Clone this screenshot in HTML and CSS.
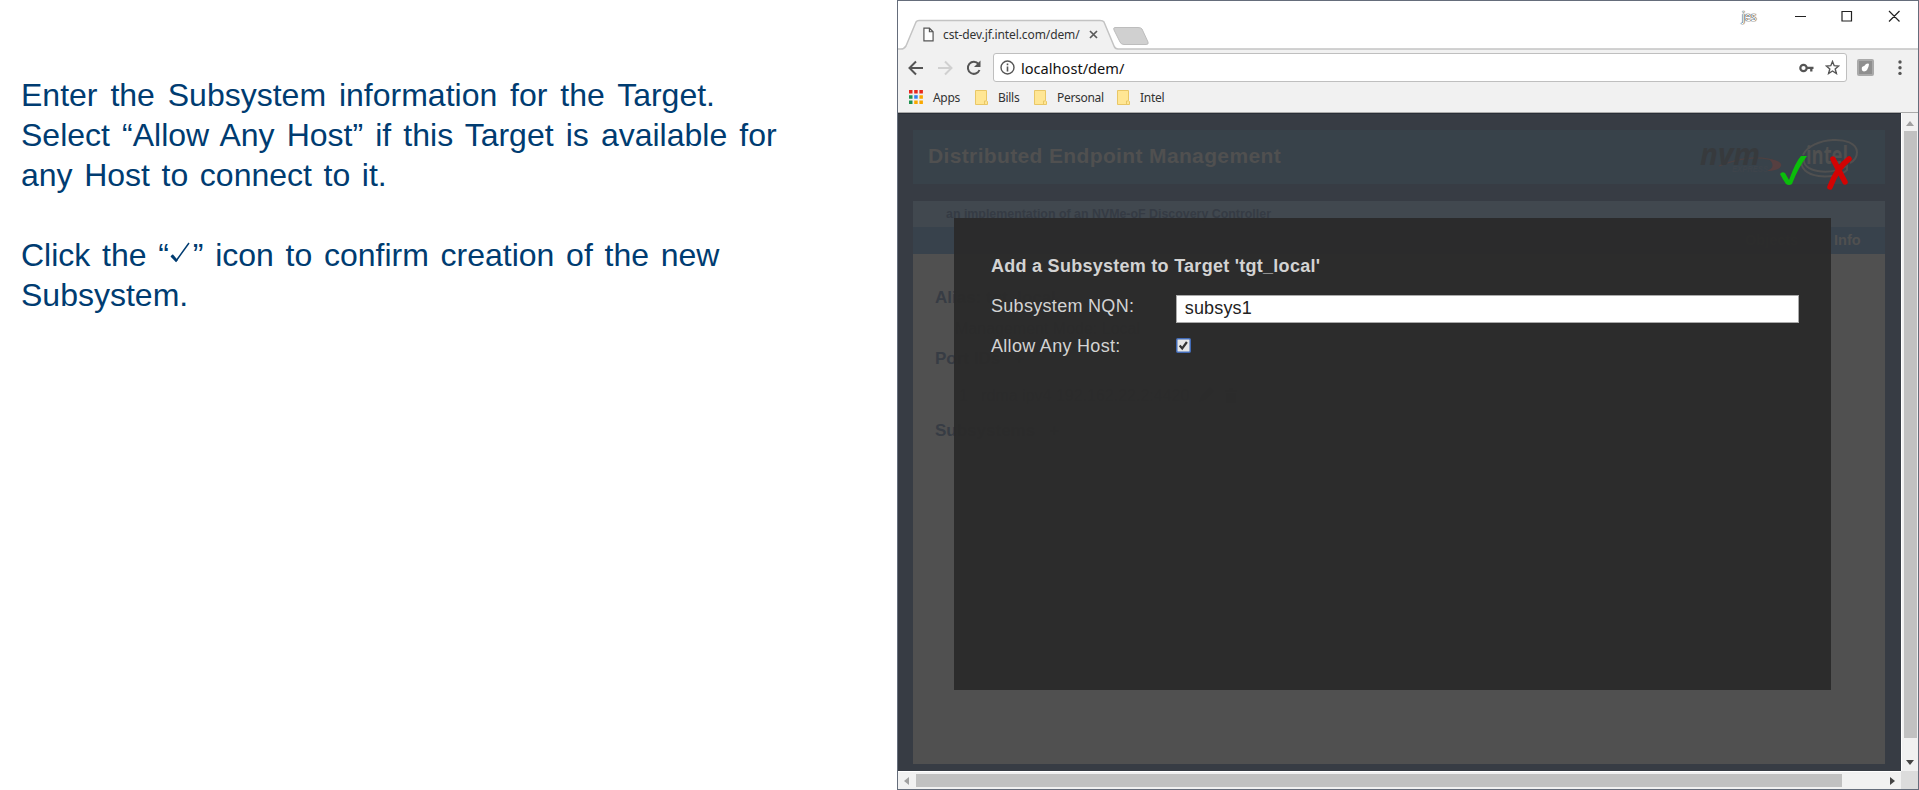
FILE: index.html
```html
<!DOCTYPE html>
<html lang="en">
<head>
<meta charset="utf-8">
<title>Distributed Endpoint Management</title>
<link rel="stylesheet" href="styles.css">
</head>
<body>
<main class="slide">
  <section class="notes">
    <p class="l1">Enter the Subsystem information for the Target.</p>
    <p class="l2">Select “Allow Any Host” if this Target is available for</p>
    <p class="l3">any Host to connect to it.</p>
    <p class="gap l4">Click the “<svg class="tick" viewBox="0 0 24 24"><path d="M2 14l5 5L20 1" fill="none" stroke="#003c71" stroke-width="1.5"/><path d="M3 13l5 6" stroke="#003c71" stroke-width="2.2"/></svg>” icon to confirm creation of the new</p>
    <p class="l5">Subsystem.</p>
  </section>
  <section class="window">
    <div class="tabstrip">
      <svg class="tabshape" width="1020" height="49" viewBox="0 0 1020 49">
        <path d="M0 48H3Q6 48 8 45L18 21Q19 19.500 21 19.500H202Q205 19.500 206 21L216 45Q217 48 220 48H1020V49H0Z" fill="#f1f1f1"/>
        <path d="M0 48H3Q6 48 8 45L18 21Q19 19.500 21 19.500H202Q205 19.500 206 21L216 45Q217 48 220 48H1020" fill="none" stroke="#c3c3c3" stroke-width="1.500"/>
        <path d="M217 26.500H240Q243 26.500 244 28L250 41Q251 43.500 248 43.500H226Q223 43.500 222 41L216 29Q215 26.500 217 26.500Z" fill="#d0d0d0" stroke="#bdbdbd"/>
      </svg>
      <div class="tab">
        <svg width="11" height="15" viewBox="0 0 12 16"><path d="M1 1h6l4 4v10H1zM7 1v4h4" fill="#fff" stroke="#555" stroke-width="1.300"/></svg>
        <span>cst-dev.jf.intel.com/dem/</span>
        <svg class="x" width="9" height="9" viewBox="0 0 9 9"><path d="M1 1l7 7M8 1L1 8" stroke="#5a5a5a" stroke-width="1.700"/></svg>
      </div>
      <div class="controls">
        <span class="jes">jes</span>
        <svg width="105" height="12" viewBox="0 0 105 12" fill="none" stroke="#222" stroke-width="1.200"><path d="M0 6.500H11M47 1.500h9.500v9.500h-9.500zM94 1l10.500 10.500M104.500 1L94 11.500"/></svg>
      </div>
    </div>
    <div class="toolbar">
      <svg class="nav" width="75" height="18" viewBox="0 0 75 18" fill="none" stroke-width="2">
        <path d="M15 9H2M8 2.500L1.500 9L8 15.500" stroke="#555"/>
        <path d="M30 9h13M37 2.500L43.500 9L37 15.500" stroke="#d0d0d0"/>
        <path d="M70.500 5A6 6 0 1 0 71.500 11" stroke="#555"/><path d="M72.500 1.500v6.500h-6.500z" fill="#555"/>
      </svg>
      <div class="address">
        <svg width="15" height="15" viewBox="0 0 15 15"><circle cx="7.500" cy="7.500" r="6.500" fill="none" stroke="#555" stroke-width="1.400"/><path d="M7.500 6.500v5M7.500 3.500v1.700" stroke="#555" stroke-width="1.600"/></svg>
        <span>localhost/dem/</span>
        <svg class="key" width="15" height="10" viewBox="0 0 15 10"><circle cx="4.500" cy="5" r="3.200" fill="none" stroke="#555" stroke-width="2.200"/><path d="M7 4.900h7.500M12.300 5v3.500" stroke="#555" stroke-width="2.300" fill="none"/></svg>
        <svg width="15" height="15" viewBox="0 0 15 15"><path d="M7.500 1.500l1.700 4.200 4.500.3-3.500 2.900 1.200 4.600-3.900-2.500-3.900 2.500 1.200-4.600L1.300 6l4.500-.3z" fill="none" stroke="#555" stroke-width="1.400"/></svg>
      </div>
      <svg class="ext" width="17" height="17" viewBox="0 0 17 17"><rect width="17" height="17" rx="2" fill="#aaa"/><rect x="2" y="2" width="13" height="13" fill="#8f8f8f"/><path d="M5 8Q4 12 7 12.500Q11 12 12 5.500Q12 4 9 5Q8 7 5 8Z" fill="#fff"/></svg>
      <svg width="4" height="16" viewBox="0 0 4 16" fill="#555"><circle cx="2" cy="2" r="1.700"/><circle cx="2" cy="7.700" r="1.700"/><circle cx="2" cy="13.400" r="1.700"/></svg>
    </div>
    <div class="bookmarks">
      <svg class="apps" width="14" height="14" viewBox="0 0 14 14"><path d="M0 0h3.500v3.500H0zM5.200 0h3.500v3.500H5.200zM10.400 0h3.500v3.500h-3.500z" fill="#e8281d"/><path d="M0 5.200h3.500v3.500H0zM0 10.400h3.500v3.500H0z" fill="#1f9350"/><path d="M5.200 5.200h3.500v3.500H5.200z" fill="#2f80ed"/><path d="M10.400 5.200h3.500v3.500h-3.500zM5.200 10.400h3.500v3.500H5.200zM10.400 10.400h3.500v3.500h-3.500z" fill="#f9a800"/></svg>
      <span class="b0">Apps</span>
      <svg class="folder" width="13" height="15" viewBox="0 0 13 15"><path d="M.5.500h11v10l1 1v3H.5z" fill="#ffe694" stroke="#e9c766"/><path d="M9.500 14v-3h2" fill="none" stroke="#e9c766"/></svg>
      <span class="b1">Bills</span>
      <svg class="folder" width="13" height="15" viewBox="0 0 13 15"><path d="M.5.500h11v10l1 1v3H.5z" fill="#ffe694" stroke="#e9c766"/><path d="M9.500 14v-3h2" fill="none" stroke="#e9c766"/></svg>
      <span class="b2">Personal</span>
      <svg class="folder" width="13" height="15" viewBox="0 0 13 15"><path d="M.5.500h11v10l1 1v3H.5z" fill="#ffe694" stroke="#e9c766"/><path d="M9.500 14v-3h2" fill="none" stroke="#e9c766"/></svg>
      <span class="b3">Intel</span>
    </div>
    <div class="view">
      <div class="page">
        <header class="banner">
          <h1>Distributed Endpoint Management</h1>
          <svg class="logos" width="170" height="48" viewBox="0 0 170 48">
            <path d="M20 28Q55 14 79 24" fill="none" stroke="#4c4041" stroke-width="1.200"/>
            <path d="M70 21Q84 23 82 28Q80 33 68 33Q78 29 70 21Z" fill="#563f40"/>
            <text class="nvm" x="1" y="27" textLength="60" lengthAdjust="spacingAndGlyphs">nvm</text>
            <text class="express" x="33" y="34" textLength="36" lengthAdjust="spacingAndGlyphs">EXPRESS</text>
            <path d="M104 17C112 -1 157 -4 158 14C158 20 155 23 151 25M103 20C97 42 138 42 148 32V28C130 38 102 34 105 20" fill="none" stroke="#505050" stroke-width="2"/>
            <text class="intel" x="107" y="26" textLength="42" lengthAdjust="spacingAndGlyphs">intel</text>
          </svg>
        </header>
        <div class="sub">an implementation of an NVMe-oF Discovery Controller</div>
        <nav class="menu"><span class="objects">Objects</span><span class="info">Info</span></nav>
        <div class="body">
          <h2>Alias: tgt_local</h2>
          <p class="mode">Management Mode: Local</p>
          <h2 class="ports">Port IDs &nbsp; +</h2>
          <p class="port">1 &nbsp; rdma ipv4 192.162.22.2:4420
            <svg width="40" height="16" viewBox="0 0 40 16" fill="#373c44"><path d="M0 15l2-6L11 0l4 4-9 9zM26 3h12v2H26zM27 6h10v10H27zM30 1h4v2h-4z"/></svg></p>
          <h2 class="subs">Subsystems &nbsp; +</h2>
        </div>
      </div>
      <div class="dialog">
        <h3>Add a Subsystem to Target 'tgt_local'</h3>
        <div class="row"><label>Subsystem NQN:</label><div class="field">subsys1</div></div>
        <div class="row second"><label>Allow Any Host:</label><svg class="check" width="15" height="15" viewBox="0 0 15 15"><rect x=".75" y=".75" width="13.500" height="13.500" rx="1" fill="#e6e6e6" stroke="#416ab6" stroke-width="1.500"/><path d="M3.700 7.500l2.500 3 4.700-6.500" fill="none" stroke="#333" stroke-width="2.200"/></svg></div>
      </div>
      <svg class="actions" width="74" height="38" viewBox="0 0 74 38">
        <path d="M1 19Q3 16 6 18L10 25Q17 6 22 1H28Q19 13 13 29Q10 31 7 29Q3 23 1 19Z" fill="#0bbd0b"/>
        <path d="M54 4L66 27M70 4Q58 13 51 32" fill="none" stroke="#d20303" stroke-width="5.500" stroke-linecap="round"/>
      </svg>
    </div>
    <div class="vbar"><svg width="8" height="5" viewBox="0 0 8 5"><path d="M0 5L4 0l4 5z" fill="#a0a0a0"/></svg><i></i><svg width="8" height="5" viewBox="0 0 8 5"><path d="M0 0h8L4 5z" fill="#444"/></svg></div>
    <div class="hbar"><svg width="5" height="8" viewBox="0 0 5 8"><path d="M5 0v8L0 4z" fill="#a0a0a0"/></svg><i></i><svg width="5" height="8" viewBox="0 0 5 8"><path d="M0 0v8l5-4z" fill="#444"/></svg></div>
    <div class="corner"></div>
  </section>
</main>
</body>
</html>
```
FILE: styles.css
```css
* { box-sizing: border-box; }
body { margin: 0; background: #fff; font-family: "Liberation Sans", sans-serif; }
h1, h2, h3, p { margin: 0; white-space: nowrap; }
svg { display: block; flex: none; }
.slide { display: grid; grid-template-columns: 897px 1022px; height: 790px; overflow: hidden; }
.notes { padding: 75px 0 0 21px; color: #003c71; font-size: 32px; line-height: 40px; }
.notes .gap { margin-top: 40px; }
.l1 { word-spacing: 4px; }
.l2 { word-spacing: 3.2px; }
.l3 { word-spacing: 2.7px; }
.l4 { word-spacing: 2.8px; }
.tick { display: inline-block; width: 24px; height: 24px; }
.window { display: grid; grid-template-columns: 1003px 17px; grid-template-rows: 49px 32px 31px 658px 18px; border: 1px solid #656d7b; height: 790px; background: #f1f1f1; }
.tabstrip, .toolbar, .bookmarks { grid-column: 1 / 3; display: flex; }
.tabstrip { position: relative; background: #fff; justify-content: space-between; font-family: "Noto Sans", sans-serif; }
.tabshape { position: absolute; left: 0; top: 0; }
.tab { position: relative; display: flex; align-items: center; height: 30px; margin: 18px 0 0 25px; font-size: 12px; color: #333; }
.tab span { width: 137px; margin-left: 9px; white-space: nowrap; letter-spacing: -.1px; }
.tab .x { margin-left: 9px; }
.controls { position: relative; display: flex; margin: 9px 18px 0 0; }
.jes { width: 53px; font-size: 12px; line-height: 14px; color: #fff; text-shadow: 0 0 1px #333, 0 0 1px #333, 0 0 1px #555; letter-spacing: -.5px; }
.toolbar { align-items: center; padding: 3px 16px 0 10px; }
.nav { margin-right: 10px; }
.address { width: 855px; height: 29px; display: flex; align-items: center; padding: 0 6px; background: #fff; border: 1px solid #bfbfbf; border-radius: 3px; }
.address span { margin-left: 6px; font: 14.6px "Noto Sans", sans-serif; color: #111; flex: 1; }
.key { margin-right: 11px; }
.ext { margin: 0 24px 0 10px; }
.bookmarks { align-items: center; padding-left: 11px; border-bottom: 1px solid #aaa; font: 12px "Noto Sans", sans-serif; color: #333; }
.bookmarks span { letter-spacing: -.3px; white-space: nowrap; }
.apps { margin-right: 10px; }
.b0 { width: 42px; }
.folder { margin-right: 10px; }
.b1 { width: 36px; }
.b2 { width: 60px; }
.view { position: relative; background: #373c44; padding: 16px 16px 7px 15px; border-top: 1px solid #292e37; overflow: hidden; }
.page { display: flex; flex-direction: column; height: 634px; }
.banner { display: flex; justify-content: space-between; height: 54px; background: #38424a; padding: 8px 16px 0 15px; color: #505050; }
.banner h1 { font-size: 21px; line-height: 36px; letter-spacing: .36px; }
.nvm { font: italic bold 31px "Open Sans", sans-serif; fill: #373a3d; }
.express { font: italic bold 9px "Liberation Sans", sans-serif; fill: #3e444b; }
.intel { font: bold 25px "Open Sans", sans-serif; fill: #505050; }
.sub { height: 26px; margin-top: 17px; padding-left: 33px; background: #41484f; color: #353b44; font-size: 12.4px; font-weight: bold; line-height: 26px; }
.menu { display: flex; height: 27px; background: #38424c; color: #505050; font-size: 14.5px; font-weight: bold; line-height: 27px; justify-content: flex-end; }
.info { width: 51px; }
.objects { width: 89px; }
.body { flex: 1; background: #505050; padding: 34px 22px; color: #373c44; }
.body h2 { font-size: 17px; line-height: 20px; }
.mode { padding-left: 20px; line-height: 20px; margin-top: 11px; }
.body .ports { margin-top: 10px; }
.port { display: flex; gap: 10px; line-height: 18px; padding-left: 24px; margin-top: 18px; }
.body .subs { margin-top: 16px; }
.dialog { position: absolute; left: 56px; top: 104px; width: 877px; height: 472px; padding: 36px 32px 0 37px; background: rgba(42, 42, 42, .95); color: #d3d3d3; }
.dialog h3 { font-size: 18px; line-height: 24px; letter-spacing: .27px; }
.row { display: flex; align-items: center; height: 28px; margin-top: 17px; font-size: 18px; }
.row label { width: 185px; margin-bottom: 6px; letter-spacing: .3px; }
.row.second { margin-top: 11px; }
.row.second label { margin-bottom: 4px; }
.check { margin-bottom: 6px; }
.field { width: 624px; height: 28px; background: #fff; color: #222; border: 1px solid #aaa; padding-left: 8px; line-height: 25px; letter-spacing: .15px; }
.actions { position: absolute; left: 881px; top: 41px; }
.vbar { background: #f1f1f1; display: flex; flex-direction: column; align-items: center; padding: 8px 0 6px; border-left: 1px solid #fff; }
.vbar i { width: 13px; height: 607px; margin: 5px 0 auto; background: #c1c1c1; }
.hbar { display: flex; align-items: center; padding: 0 6px; border-top: 1px solid #fff; }
.hbar i { height: 13px; width: 926px; margin: 0 auto 0 7px; background: #c1c1c1; }
.corner { background: #dcdcdc; }
```
